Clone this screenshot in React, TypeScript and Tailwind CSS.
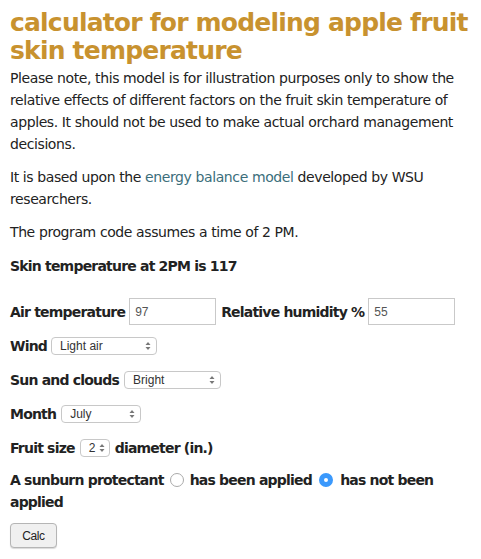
import React from "react";

const font = { fontFamily: '"DejaVu Sans", Verdana, sans-serif' };
const ctl = { fontFamily: '"Liberation Sans", Arial, sans-serif' };

function Arrows() {
  return (
    <svg width="6" height="10" viewBox="0 0 6 10" className="shrink-0">
      <path d="M3 1 L5.5 4 H0.5 Z" fill="#777" />
      <path d="M3 9 L5.5 6 H0.5 Z" fill="#777" />
    </svg>
  );
}

function FakeSelect({ value, width }: { value: string; width: string }) {
  return (
    <span
      className={`inline-flex items-center justify-between h-[18px] ${width} rounded-[4px] border border-[#c8c8c8] bg-white pl-[8px] pr-[5px] text-[12px] font-normal tracking-normal text-[#333]`}
      style={ctl}
    >
      <span>{value}</span>
      <Arrows />
    </span>
  );
}

function TextBox({ value }: { value: string }) {
  return (
    <span
      className="inline-flex items-center h-[27px] w-[87px] border border-[#c9c9c9] bg-white px-[5px] text-[12px] font-normal tracking-normal text-[#555]"
      style={ctl}
    >
      {value}
    </span>
  );
}

export default function App() {
  return (
    <div className="min-h-[559px] bg-white px-[10px] pt-[9px] text-[14px] leading-[22px] tracking-[-0.4px] text-[#222]" style={font}>
      <h1 className="text-[25px] leading-[28px] font-bold text-[#c8922f] tracking-[-0.8px]">
        calculator for modeling apple fruit skin temperature
      </h1>
      <p className="mt-[2px]">
        Please note, this model is for illustration purposes only to show the relative effects of different factors on the fruit
        skin temperature of apples. It should not be used to make actual orchard management decisions.
      </p>
      <p className="mt-[11px]">
        It is based upon the <span className="text-[#3b6e7b]">energy balance model</span> developed by WSU researchers.
      </p>
      <p className="mt-[11px]">The program code assumes a time of 2 PM.</p>
      <p className="mt-[12px] font-bold tracking-[-0.8px]">Skin temperature at 2PM is 117</p>

      <div className="mt-[21px] flex items-center gap-[4px] font-bold tracking-[-0.8px]">
        <span>Air temperature</span>
        <TextBox value="97" />
        <span className="ml-[1px]">Relative humidity %</span>
        <TextBox value="55" />
      </div>
      <div className="mt-[10px] flex items-center gap-[4px] font-bold tracking-[-0.8px]">
        <span>Wind</span>
        <FakeSelect value="Light air" width="w-[106px]" />
      </div>
      <div className="mt-[12px] flex items-center gap-[5px] font-bold tracking-[-0.8px]">
        <span>Sun and clouds</span>
        <FakeSelect value="Bright" width="w-[97px]" />
      </div>
      <div className="mt-[12px] flex items-center gap-[5px] font-bold tracking-[-0.8px]">
        <span>Month</span>
        <FakeSelect value="July" width="w-[80px]" />
      </div>
      <div className="mt-[12px] flex items-center gap-[5px] font-bold tracking-[-0.8px]">
        <span>Fruit size</span>
        <span
          className="inline-flex items-center justify-between h-[18px] w-[30px] rounded-[4px] border border-[#c8c8c8] bg-white pl-[8px] pr-[4px] text-[12px] font-normal tracking-normal text-[#333]"
          style={ctl}
        >
          <span>2</span>
          <Arrows />
        </span>
        <span>diameter (in.)</span>
      </div>
      <p className="mt-[10px] font-bold tracking-[-0.8px]">
        A sunburn protectant{" "}
        <span className="inline-block w-[14px] h-[14px] rounded-full border border-[#aaa] bg-white align-middle mx-[2px] -mt-[2px]" />{" "}
        has been applied{" "}
        <span className="inline-block w-[14px] h-[14px] rounded-full border-[5px] border-[#3b99fc] bg-white align-middle mx-[3px] -mt-[2px]" />{" "}
        has not been applied
      </p>
      <button
        className="mt-[10px] h-[25px] w-[47px] rounded-[4px] border border-[#b5b5b5] bg-[#f0f0f0] text-[12px] text-[#222] shadow-[0_1px_1px_rgba(0,0,0,0.15)]"
        style={ctl}
      >
        Calc
      </button>
    </div>
  );
}
